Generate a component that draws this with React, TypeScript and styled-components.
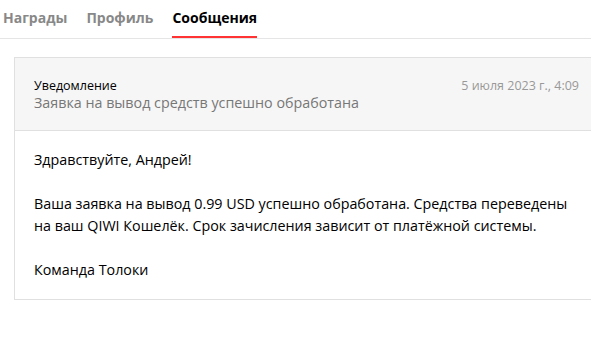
import styled, { createGlobalStyle } from 'styled-components';

const GlobalStyle = createGlobalStyle`
  body {
    margin: 0;
    background: #fff;
    font-family: 'Open Sans', 'Liberation Sans', sans-serif;
    color: #000;
    overflow: hidden;
  }
`;

const tabs = ['Награды', 'Профиль', 'Сообщения'];

export default function App() {
  return (
    <>
      <GlobalStyle />
      <Page>
        <TabBar>
          {tabs.map((tab) => (
            <Tab key={tab} active={tab === 'Сообщения'}>
              {tab}
            </Tab>
          ))}
        </TabBar>
        <Message>
          <MessageHeader>
            <HeaderTexts>
              <Kind>Уведомление</Kind>
              <Subject>Заявка на вывод средств успешно обработана</Subject>
            </HeaderTexts>
            <Date>5 июля 2023 г., 4:09</Date>
          </MessageHeader>
          <MessageBody>
            <p>Здравствуйте, Андрей!</p>
            <p>
              Ваша заявка на вывод 0.99 USD успешно обработана. Средства переведены
              на ваш QIWI Кошелёк. Срок зачисления зависит от платёжной системы.
            </p>
            <p>Команда Толоки</p>
          </MessageBody>
        </Message>
      </Page>
    </>
  );
}

const Page = styled.div`
  width: 610px;
`;

const TabBar = styled.div`
  display: flex;
  gap: 19px;
  padding-left: 3px;
  height: 38px;
  border-bottom: 1px solid #e5e5e5;
`;

const Tab = styled.div<{ active?: boolean }>`
  height: 100%;
  box-sizing: border-box;
  padding-top: 8px;
  font-size: 14px;
  line-height: 19px;
  font-weight: 700;
  color: ${({ active }) => (active ? '#000' : '#888')};
  border-bottom: 2px solid ${({ active }) => (active ? '#f33' : 'transparent')};
`;

const Message = styled.div`
  width: 583px;
  margin: 18px 0 0 14px;
  border: 1px solid #e0e0e0;
`;

const MessageHeader = styled.div`
  display: flex;
  justify-content: space-between;
  align-items: flex-start;
  padding: 19px 19px 18px;
  background: #f6f6f6;
  border-bottom: 1px solid #e0e0e0;
`;

const HeaderTexts = styled.div`
  display: flex;
  flex-direction: column;
`;

const Kind = styled.span`
  font-size: 12.5px;
  line-height: 17px;
`;

const Subject = styled.span`
  font-size: 14.3px;
  line-height: 18px;
  color: #777;
`;

const Date = styled.span`
  font-size: 12.5px;
  line-height: 17px;
  color: #999;
`;

const MessageBody = styled.div`
  padding: 18px 19px 18px;
  font-size: 14.3px;
  line-height: 22px;

  p {
    margin: 0 0 22px;
  }

  p:last-child {
    margin-bottom: 0;
  }
`;
